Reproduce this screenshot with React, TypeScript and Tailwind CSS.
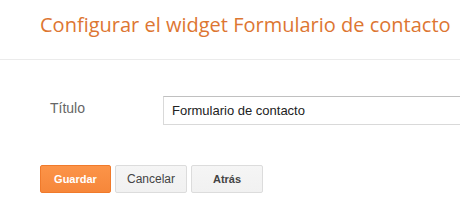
import React from "react";

export default function App() {
  return (
    <div className="w-[460px] h-[208px] bg-white overflow-hidden font-['Liberation_Sans',Arial,sans-serif]">
      {/* Header */}
      <div className="h-[60px] border-b border-[#ebebeb] pl-[40px] pt-[11px]">
        <h1 className="font-['Open_Sans',sans-serif] text-[20px] leading-[28px] text-[#dd7632] whitespace-nowrap">
          Configurar el widget Formulario de contacto
        </h1>
      </div>

      {/* Field row */}
      <div className="flex items-start pt-[36px] pl-[50px]">
        <label className="w-[113px] shrink-0 text-[14px] leading-[20px] text-[#666] pt-[2px]">
          Título
        </label>
        <div className="w-[320px] shrink-0 h-[29px] border border-[#d9d9d9] border-t-[#c0c0c0] bg-white flex items-center pl-[8px] text-[13px] text-[#222] whitespace-nowrap">
          Formulario de contacto
        </div>
      </div>

      {/* Buttons */}
      <div className="flex gap-[4px] pl-[40px] pt-[40px]">
        <button className="w-[71px] h-[28px] rounded-[2px] border border-[#f07a2b] bg-gradient-to-b from-[#fc9448] to-[#f6873a] text-white text-[11px] font-bold">
          Guardar
        </button>
        <button className="w-[72px] h-[28px] rounded-[2px] border border-[#dcdcdc] bg-gradient-to-b from-[#f5f5f5] to-[#f1f1f1] text-[#444] text-[12px]">
          Cancelar
        </button>
        <button className="w-[72px] h-[28px] rounded-[2px] border border-[#dcdcdc] bg-gradient-to-b from-[#f5f5f5] to-[#f1f1f1] text-[#444] text-[11px] font-bold">
          Atrás
        </button>
      </div>
    </div>
  );
}
